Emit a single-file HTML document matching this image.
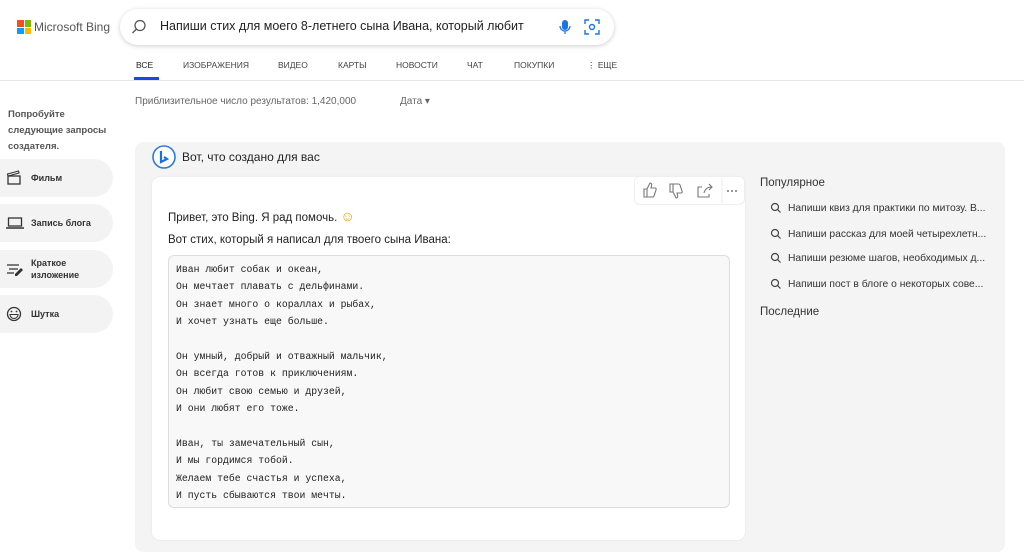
<!DOCTYPE html>
<html><head><meta charset="utf-8"><style>
*{margin:0;padding:0;box-sizing:border-box}
body{width:1024px;height:558px;background:#fff;font-family:"Liberation Sans",sans-serif;color:#222;position:relative;overflow:hidden}
.a{position:absolute}
.nav span{position:absolute;top:60px;font-size:8.5px;color:#444}
.mono{font-family:"Liberation Mono",monospace;font-size:9.8px;line-height:17.4px;color:#222;white-space:pre}
.pill{position:absolute;left:0;width:113px;height:38px;background:#f3f3f3;border-radius:0 19px 19px 0;font-size:9px;font-weight:bold;color:#333}
.pill span{position:absolute;left:31px}
.pop{position:absolute;left:788px;font-size:10.3px;color:#333}
</style></head><body>
<div class="a" style="left:17px;top:20px;width:14px;height:14px">
<div class="a" style="left:0;top:0;width:6.5px;height:6.5px;background:#f25022"></div>
<div class="a" style="left:7.5px;top:0;width:6.5px;height:6.5px;background:#7fba00"></div>
<div class="a" style="left:0;top:7.5px;width:6.5px;height:6.5px;background:#00a4ef"></div>
<div class="a" style="left:7.5px;top:7.5px;width:6.5px;height:6.5px;background:#ffb900"></div></div>
<div class="a" style="left:34px;top:20px;font-size:12px;color:#555">Microsoft Bing</div>
<div class="a" style="left:120px;top:9px;width:494px;height:36px;border-radius:18px;box-shadow:0 1px 5px rgba(0,0,0,.2);background:#fff"></div>
<svg class="a" style="left:131px;top:19px" width="16" height="16"><circle cx="9" cy="6.5" r="5" fill="none" stroke="#555" stroke-width="1.3"/><line x1="5.5" y1="10" x2="1.5" y2="14" stroke="#555" stroke-width="1.3"/></svg>
<div class="a" style="left:160px;top:19px;font-size:12.5px;color:#222">Напиши стих для моего 8-летнего сына Ивана, который любит</div>
<svg class="a" style="left:558px;top:19px" width="14" height="16"><rect x="4" y="1" width="6" height="10" rx="3" fill="#1a73e8"/><path d="M2 7a5 5 0 0 0 10 0M7 12v3" fill="none" stroke="#1a73e8" stroke-width="1.2"/></svg>
<svg class="a" style="left:584px;top:19px" width="16" height="16"><path d="M1 5V1h4M11 1h4v4M15 11v4h-4M5 15H1v-4" fill="none" stroke="#1a73e8" stroke-width="1.4"/><circle cx="8" cy="8" r="2.5" fill="none" stroke="#1a73e8" stroke-width="1.4"/></svg>
<div class="nav"><span style="left:136px;color:#222">ВСЕ</span><span style="left:183px">ИЗОБРАЖЕНИЯ</span><span style="left:278px">ВИДЕО</span><span style="left:338px">КАРТЫ</span><span style="left:396px">НОВОСТИ</span><span style="left:467px">ЧАТ</span><span style="left:514px">ПОКУПКИ</span><span style="left:587px">⋮ ЕЩЕ</span></div>
<div class="a" style="left:134px;top:77px;width:25px;height:3px;background:#174ae4"></div>
<div class="a" style="left:0;top:80px;width:1024px;height:1px;background:#e5e5e5"></div>
<div class="a" style="left:135px;top:96px;font-size:10px;color:#666">Приблизительное число результатов: 1,420,000</div>
<div class="a" style="left:400px;top:96px;font-size:10px;color:#666">Дата ▾</div>
<div class="a" style="left:8px;top:107px;font-size:9.5px;font-weight:bold;color:#555;line-height:16px">Попробуйте<br>следующие запросы<br>создателя.</div>
<div class="pill" style="top:159px"><span style="top:14px">Фильм</span><svg class="a" style="left:6px;top:11px" width="16" height="16"><rect x="2" y="6" width="12" height="8" fill="none" stroke="#333" stroke-width="1.3"/><path d="M2 6l11-3-0.5-2L1.5 4z" fill="none" stroke="#333" stroke-width="1.1"/></svg></div>
<div class="pill" style="top:204px"><span style="top:14px">Запись блога</span><svg class="a" style="left:6px;top:13px" width="18" height="13"><rect x="2.5" y="1" width="13" height="8" fill="none" stroke="#333" stroke-width="1.3"/><line x1="0" y1="11" x2="18" y2="11" stroke="#333" stroke-width="1.5"/></svg></div>
<div class="pill" style="top:250px"><span style="top:7px;line-height:12px">Краткое<br>изложение</span><svg class="a" style="left:6px;top:12px" width="18" height="14"><path d="M1 3h12M3 7h9M1 11h7" stroke="#333" stroke-width="1.3"/><path d="M9 12l6-6 2 2-6 6h-2z" fill="#333"/></svg></div>
<div class="pill" style="top:295px"><span style="top:14px">Шутка</span><svg class="a" style="left:6px;top:11px" width="16" height="16"><circle cx="8" cy="8" r="6.5" fill="none" stroke="#333" stroke-width="1.3"/><path d="M4 8.5h8a4 4 0 0 1-8 0z" fill="none" stroke="#333" stroke-width="1.1"/><circle cx="5.5" cy="5.5" r="0.9" fill="#333"/><circle cx="10.5" cy="5.5" r="0.9" fill="#333"/></svg></div>
<div class="a" style="left:135px;top:142px;width:870px;height:410px;background:#f4f4f4;border-radius:8px"></div>
<svg class="a" style="left:151px;top:145px" width="26" height="26"><circle cx="13" cy="12" r="11" fill="#fff" stroke="#2c7ad6" stroke-width="1.6"/><path d="M10 6v11l6-3-3-2" fill="none" stroke="#1b6ee0" stroke-width="2.2"/></svg>
<div class="a" style="left:182px;top:150px;font-size:12px;color:#222">Вот, что создано для вас</div>
<div class="a" style="left:152px;top:177px;width:593px;height:363px;background:#fff;border-radius:8px;box-shadow:0 0 2px rgba(0,0,0,.08)"></div>
<div class="a" style="left:634px;top:176px;width:111px;height:29px;background:#fff;border:1px solid #eee;border-radius:6px"></div>
<svg class="a" style="left:634px;top:176px" width="111" height="29"><g fill="none" stroke="#777" stroke-width="1.1">
<path d="M10 13h3v8h-3zM13 13l3-6c1.5 0 2 1 1.5 3l-.5 2h4c1 0 1.5 1 1 2l-2 6c-.3.7-.8 1-1.5 1H13"/>
<path d="M36 16h3V8h-3zM39 16l3 6c1.5 0 2-1 1.5-3l-.5-2h4c1 0 1.5-1 1-2l-2-6c-.3-.7-.8-1-1.5-1H39"/>
<path d="M68 11h-4v10h11v-3M70 17c1-4 4-6 8-6M75 8l3 3-3 3"/>
<line x1="88" y1="2" x2="88" y2="27" stroke="#eee"/></g>
<g fill="#777"><circle cx="94" cy="15" r="1"/><circle cx="98" cy="15" r="1"/><circle cx="102" cy="15" r="1"/></g></svg>
<div class="a" style="left:168px;top:208px;font-size:11.5px">Привет, это Bing. Я рад помочь. <span style="color:#e0a000;font-size:14px">☺</span></div>
<div class="a" style="left:168px;top:234px;font-size:11.5px">Вот стих, который я написал для твоего сына Ивана:</div>
<div class="a" style="left:168px;top:255px;width:562px;height:253px;background:#f8f8f8;border:1px solid #ddd;border-radius:6px"></div>
<div class="a mono" style="left:176px;top:261px">Иван любит собак и океан,
Он мечтает плавать с дельфинами.
Он знает много о кораллах и рыбах,
И хочет узнать еще больше.

Он умный, добрый и отважный мальчик,
Он всегда готов к приключениям.
Он любит свою семью и друзей,
И они любят его тоже.

Иван, ты замечательный сын,
И мы гордимся тобой.
Желаем тебе счастья и успеха,
И пусть сбываются твои мечты.</div>
<div class="a" style="left:760px;top:177px;font-size:11.5px;color:#333">Популярное</div>
<div class="pop" style="top:203px">Напиши квиз для практики по митозу. В...</div>
<div class="pop" style="top:229px">Напиши рассказ для моей четырехлетн...</div>
<div class="pop" style="top:253px">Напиши резюме шагов, необходимых д...</div>
<div class="pop" style="top:279px">Напиши пост в блоге о некоторых сове...</div>
<svg class="a" style="left:770px;top:202px" width="12" height="90"><g fill="none" stroke="#444" stroke-width="1.2"><circle cx="5" cy="5" r="3.5"/><path d="M7.5 7.5l3 3"/><circle cx="5" cy="31" r="3.5"/><path d="M7.5 33.5l3 3"/><circle cx="5" cy="55" r="3.5"/><path d="M7.5 57.5l3 3"/><circle cx="5" cy="81" r="3.5"/><path d="M7.5 83.5l3 3"/></g></svg>
<div class="a" style="left:760px;top:306px;font-size:11.5px;color:#333">Последние</div>
</body></html>
